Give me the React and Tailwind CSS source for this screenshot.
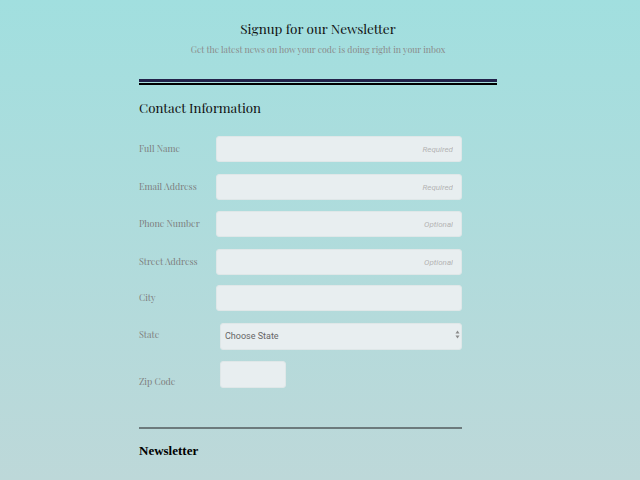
import { useState } from "react";

const serif = "font-['Playfair_Display','DejaVu_Serif','Liberation_Serif',serif]";

function Field({ label, hint, top }) {
  return (
    <div className={`flex items-center h-[26px] ${top}`}>
      <label className={`w-[77px] shrink-0 text-[9px] text-[#7d7d7d] ${serif}`}>{label}</label>
      <input
        type="text"
        placeholder={hint}
        className="w-[246px] h-[26px] rounded-[3px] border border-[#dfe7e8] bg-[#e8eef0] px-2 text-right text-[8px] italic font-['Roboto',sans-serif] text-[#555] placeholder:text-[#b4b4b4] outline-none"
      />
    </div>
  );
}

export default function App() {
  const [state, setState] = useState("");
  return (
    <div className="w-full min-h-screen h-[480px] overflow-hidden bg-gradient-to-b from-[#a1dfdf] to-[#bdd8d9]">
      <div className="w-[358px] ml-[139px] pt-[19px]">
        <h1 className={`text-center text-[13.5px] leading-[18px] text-[#111] ${serif}`}>Signup for our Newsletter</h1>
        <p className={`mt-[6px] text-center text-[8.8px] leading-[12px] text-[#8a8a8a] ${serif}`}>
          Get the latest news on how your code is doing right in your inbox
        </p>
        <div className="mt-[24px] h-[3px] bg-[#22224a]" />
        <div className="mt-px h-[2px] bg-black" />

        <form className="w-[323px]">
          <h2 className={`mt-[13px] text-[13.3px] leading-[20px] text-[#111] ${serif}`}>Contact Information</h2>

          <Field label="Full Name" hint="Required" top="mt-[18px]" />
          <Field label="Email Address" hint="Required" top="mt-[12px]" />
          <Field label="Phone Number" hint="Optional" top="mt-[11px]" />
          <Field label="Street Address" hint="Optional" top="mt-[12px]" />
          <Field label="City" hint="" top="mt-[10px]" />

          <div className="flex items-center h-[27px] mt-[10px]">
            <label className={`w-[81px] shrink-0 text-[9px] text-[#7d7d7d] ${serif}`}>State</label>
            <div className="relative w-[242px] h-[27px]">
              <select
                value={state}
                onChange={(e) => setState(e.target.value)}
                className="appearance-none w-full h-full rounded-[3px] border border-[#dfe7e8] bg-[#e8eef0] pl-[4px] text-[9px] font-['Roboto',sans-serif] text-[#666] outline-none"
              >
                <option value="">Choose State</option>
                <option value="CA">California</option>
                <option value="NY">New York</option>
              </select>
              <svg className="absolute right-[2px] top-[9px]" width="5" height="9" viewBox="0 0 5 9">
                <path d="M2.5 0.5 L4.5 3.5 L0.5 3.5 Z" fill="#8a8a8a" />
                <path d="M0.5 5.5 L4.5 5.5 L2.5 8.5 Z" fill="#8a8a8a" />
              </svg>
            </div>
          </div>

          <div className="flex items-end h-[27px] mt-[13px]">
            <label className={`w-[81px] shrink-0 pb-[1px] text-[9px] leading-[12px] text-[#7d7d7d] ${serif}`}>Zip Code</label>
            <input
              type="text"
              className="w-[66px] h-[27px] rounded-[3px] border border-[#dfe7e8] bg-[#e8eef0] px-2 text-[9px] outline-none"
            />
          </div>

          <div className="mt-[39px] h-[2px] bg-[#6c7a7c]" />
          <h2 className="mt-[14px] text-[13px] leading-[16px] font-bold text-black font-['Liberation_Serif',serif]">Newsletter</h2>
        </form>
      </div>
    </div>
  );
}
